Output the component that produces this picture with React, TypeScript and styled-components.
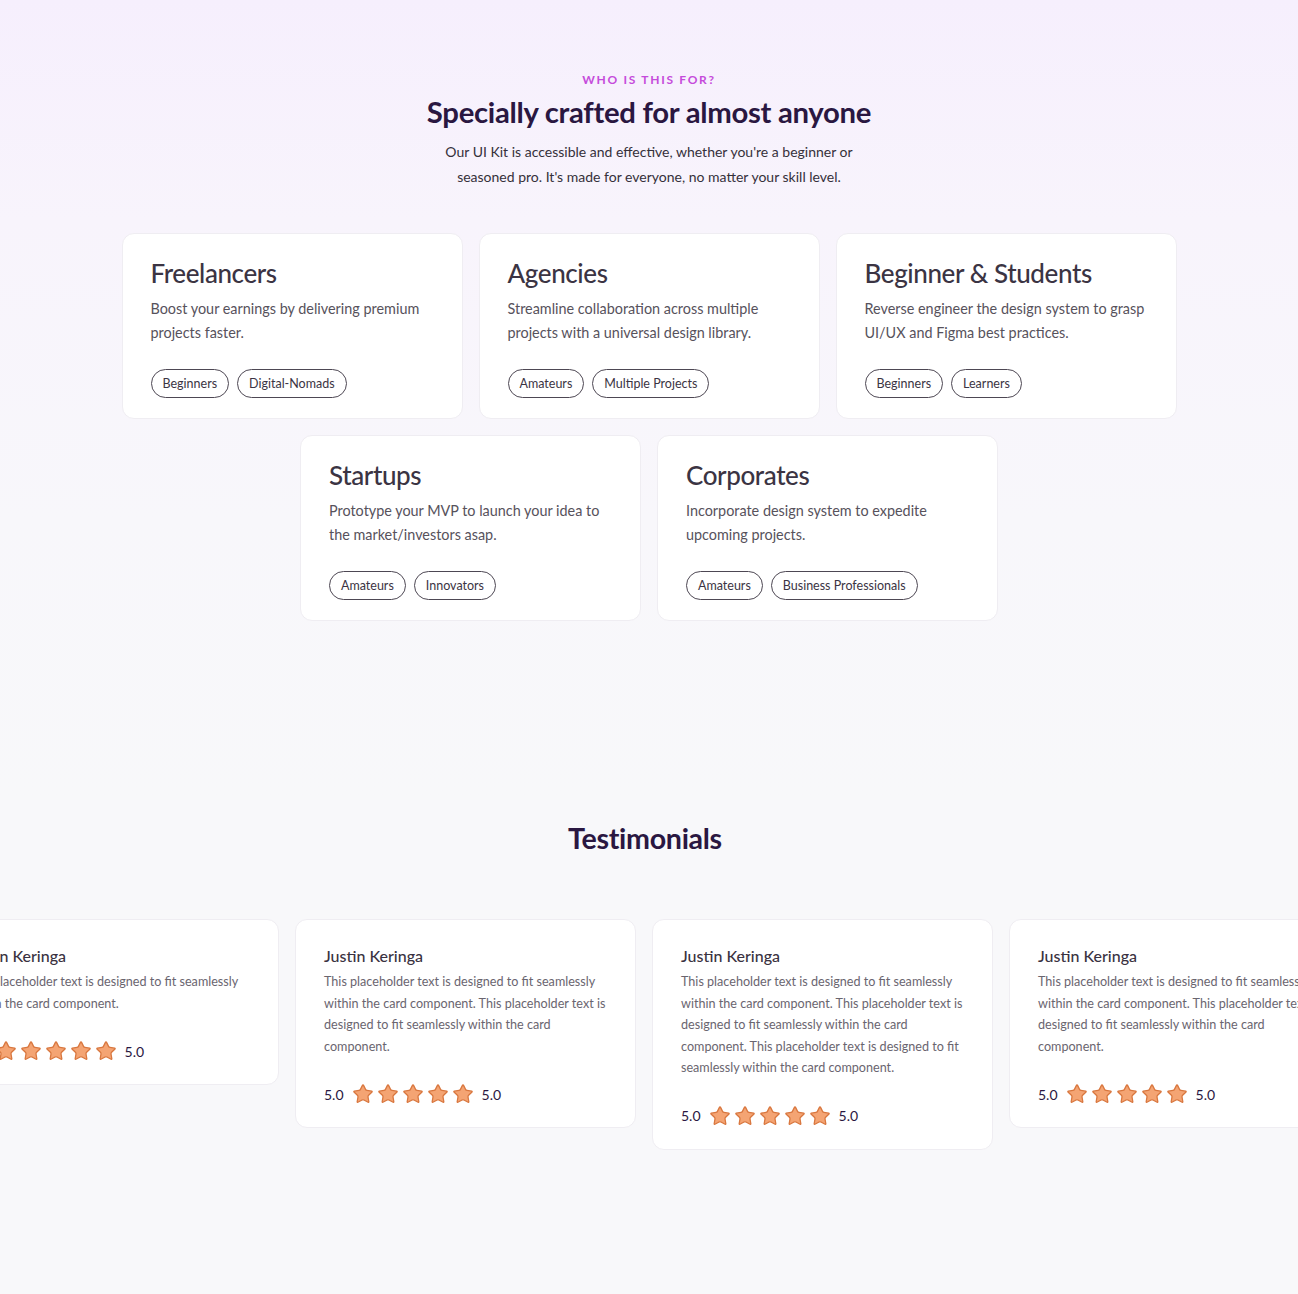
import React from "react";
import styled, { createGlobalStyle } from "styled-components";
import { Star } from "lucide-react";

const GlobalStyle = createGlobalStyle`
  html, body {
    margin: 0;
    padding: 0;
  }
  body {
    font-family: "Lato", "Noto Sans", sans-serif;
    background: #f8f8fa;
    -webkit-font-smoothing: antialiased;
  }
`;

const Page = styled.div`
  min-height: 1294px;
  background: linear-gradient(180deg, #f6effd 0px, #f8f4fc 220px, #f8f7fb 520px, #f8f8fa 800px);
  overflow: hidden;
`;

const Intro = styled.section`
  display: flex;
  flex-direction: column;
  align-items: center;
  padding-top: 72px;
`;

const Eyebrow = styled.span`
  font-size: 12px;
  line-height: 16px;
  font-weight: 700;
  letter-spacing: 1.7px;
  color: #c54bdb;
  text-transform: uppercase;
`;

const Heading = styled.h2`
  margin: 6px 0 0;
  font-size: 29.3px;
  line-height: 36px;
  font-weight: 700;
  color: #2a1741;
  letter-spacing: -0.3px;
`;

const Lead = styled.p`
  margin: 9px 0 0;
  width: 430px;
  text-align: center;
  font-size: 14px;
  line-height: 25px;
  color: #35303a;
`;

const CardGrid = styled.div`
  display: flex;
  flex-wrap: wrap;
  justify-content: center;
  gap: 16px;
  width: 1055px;
  margin: 44px auto 0;
`;

const AudienceCard = styled.article`
  box-sizing: border-box;
  width: 341px;
  height: 186px;
  padding: 23px 28px 20px;
  background: #ffffff;
  border: 1px solid #efedf2;
  border-radius: 12px;
  display: flex;
  flex-direction: column;
`;

const CardTitle = styled.h3`
  margin: 0;
  font-size: 26px;
  line-height: 32px;
  font-weight: 500;
  color: #3b3443;
  letter-spacing: -0.4px;
`;

const CardText = styled.p`
  margin: 8px 0 0;
  font-size: 14.4px;
  line-height: 24px;
  color: #57525c;
`;

const TagRow = styled.div`
  display: flex;
  gap: 8px;
  margin-top: auto;
`;

const Tag = styled.span`
  box-sizing: border-box;
  height: 29px;
  padding: 0 11px;
  display: inline-flex;
  align-items: center;
  border: 1px solid #4d4753;
  border-radius: 15px;
  font-size: 12.5px;
  color: #3b3443;
`;

const Testimonials = styled.section`
  margin-top: 200px;
  display: flex;
  flex-direction: column;
  align-items: center;
`;

const SectionTitle = styled.h2`
  margin: 0 8px 0 0;
  font-size: 28.6px;
  line-height: 34px;
  font-weight: 700;
  color: #2a1741;
  letter-spacing: -0.3px;
`;

const Carousel = styled.div`
  width: 100%;
  overflow: hidden;
  margin-top: 64px;
`;

const Track = styled.div`
  display: flex;
  align-items: flex-start;
  gap: 16px;
  width: max-content;
  margin-left: -62px;
`;

const ReviewCard = styled.article`
  box-sizing: border-box;
  width: 341px;
  flex-shrink: 0;
  padding: 25px 28px 22px;
  background: #ffffff;
  border: 1px solid #efedf2;
  border-radius: 12px;
`;

const ReviewName = styled.h4`
  margin: 0;
  font-size: 16px;
  line-height: 22px;
  font-weight: 500;
  color: #3a3241;
`;

const ReviewText = styled.p`
  margin: 4px 0 0;
  font-size: 12.6px;
  line-height: 21.6px;
  color: #6a656f;
`;

const Rating = styled.div`
  display: flex;
  align-items: center;
  gap: 3px;
  margin-top: 26px;
  height: 22px;
`;

const Score = styled.span`
  font-size: 14px;
  color: #2a1741;
  margin: 0 5px;
  &:first-child {
    margin-left: 0;
  }
`;

const audiences = [
  {
    title: "Freelancers",
    text: "Boost your earnings by delivering premium projects faster.",
    tags: ["Beginners", "Digital-Nomads"],
  },
  {
    title: "Agencies",
    text: "Streamline collaboration across multiple projects with a universal design library.",
    tags: ["Amateurs", "Multiple Projects"],
  },
  {
    title: "Beginner & Students",
    text: "Reverse engineer the design system to grasp UI/UX and Figma best practices.",
    tags: ["Beginners", "Learners"],
  },
  {
    title: "Startups",
    text: "Prototype your MVP to launch your idea to the market/investors asap.",
    tags: ["Amateurs", "Innovators"],
  },
  {
    title: "Corporates",
    text: "Incorporate design system to expedite upcoming projects.",
    tags: ["Amateurs", "Business Professionals"],
  },
];

const sentence = "This placeholder text is designed to fit seamlessly within the card component.";

// how many times the placeholder sentence repeats in each card
const reviews = [1, 2, 3, 2];

function Stars() {
  return (
    <>
      {[0, 1, 2, 3, 4].map((i) => (
        <Star key={i} size={22} fill="#f4a473" color="#d9773f" strokeWidth={1.4} />
      ))}
    </>
  );
}

export default function App(): JSX.Element {
  return (
    <Page>
      <GlobalStyle />
      <Intro>
        <Eyebrow>Who is this for?</Eyebrow>
        <Heading>Specially crafted for almost anyone</Heading>
        <Lead>
          Our UI Kit is accessible and effective, whether you're a beginner or seasoned pro. It's made for
          everyone, no matter your skill level.
        </Lead>
      </Intro>

      <CardGrid>
        {audiences.map((a) => (
          <AudienceCard key={a.title}>
            <CardTitle>{a.title}</CardTitle>
            <CardText>{a.text}</CardText>
            <TagRow>
              {a.tags.map((t) => (
                <Tag key={t}>{t}</Tag>
              ))}
            </TagRow>
          </AudienceCard>
        ))}
      </CardGrid>

      <Testimonials>
        <SectionTitle>Testimonials</SectionTitle>
        <Carousel>
          <Track>
            {reviews.map((count, i) => (
              <ReviewCard key={i}>
                <ReviewName>Justin Keringa</ReviewName>
                <ReviewText>{Array(count).fill(sentence).join(" ")}</ReviewText>
                <Rating>
                  <Score>5.0</Score>
                  <Stars />
                  <Score>5.0</Score>
                </Rating>
              </ReviewCard>
            ))}
          </Track>
        </Carousel>
      </Testimonials>
    </Page>
  );
}
